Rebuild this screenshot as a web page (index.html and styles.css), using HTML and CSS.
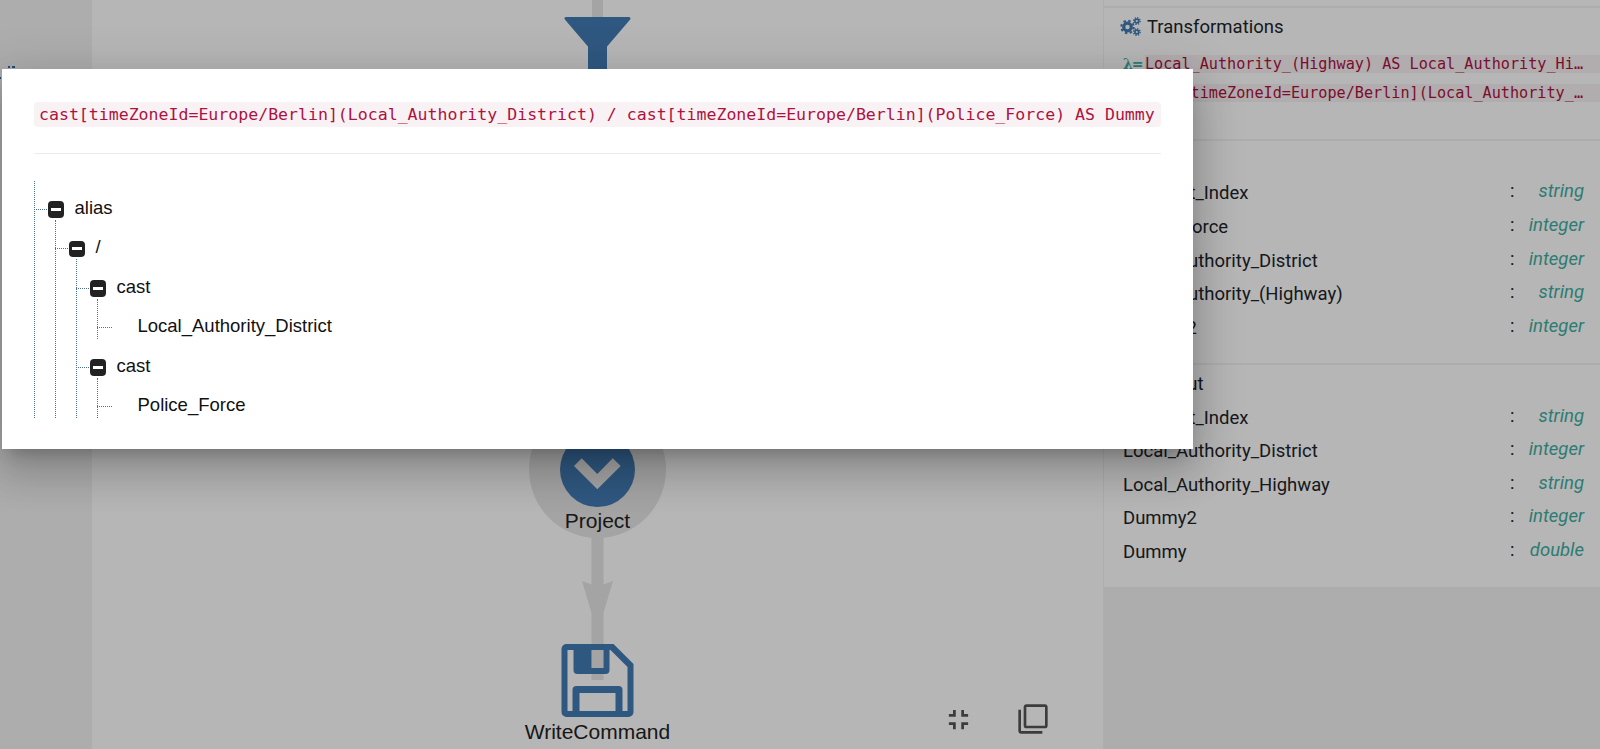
FILE: index.html
```html
<!DOCTYPE html>
<html lang="en">
<head>
<meta charset="utf-8">
<title>Plan</title>
<link rel="stylesheet" href="styles.css">
</head>
<body>
<div class="app">
  <aside class="gutter">
    <svg class="gutter-icon" width="20" height="30" viewBox="0 0 20 30"><path class="gutter-mark" d="M8 1h2M12 1h3M0 11v2"/></svg>
  </aside>
  <main class="canvas">
    <svg class="diagram" width="1011" height="749" viewBox="92 0 1011 749">
      <rect class="edge" x="592" y="0" width="11" height="20"/>
      <rect class="edge" x="591.5" y="530" width="12" height="150"/>
      <path class="edge" d="M582 581L591.5 584.5H603.500L613 581L597.500 633z"/>
      <path class="node" d="M566 18.500H629L605.500 46V100H589.500V46z"/>
      <circle class="halo" cx="597.500" cy="469.500" r="68.500"/>
      <circle class="node-plain" cx="597.500" cy="469.500" r="37.500"/>
      <path class="halo" d="M574 466L581.700 458.300L597.300 474L612.700 458.300L620.700 466L597.300 489.300z"/>
      <g transform="translate(561.500 644)">
        <path class="node-plain" fill-rule="evenodd" d="M5 0H52L72 20V68a5 5 0 0 1-5 5H5a5 5 0 0 1-5-5V5a5 5 0 0 1 5-5zM6 6V67H11V46a4 4 0 0 1 4-4H57a4 4 0 0 1 4 4V67H66V23L49 6H48V26a4 4 0 0 1-4 4H16a4 4 0 0 1-4-4V6zM18 49V67H54V49zM30 6V24H42V6z"/>
      </g>
    </svg>
    <div class="label label-project">Project</div>
    <div class="label label-write">WriteCommand</div>
    <div class="tools">
      <svg class="tool-exit" width="33" height="33" viewBox="0 0 24 24"><path d="M5 16h3v3h2v-5H5v2zm3-8H5v2h5V5H8v3zm6 11h2v-3h3v-2h-5v5zm2-11V5h-2v5h5V8h-3z"/></svg>
      <svg class="tool-copy" width="32" height="32" viewBox="0 0 24 24"><path d="M3 5H1v16c0 1.100.9 2 2 2h16v-2H3V5zm18-4H7c-1.100 0-2 .9-2 2v14c0 1.100.9 2 2 2h14c1.100 0 2-.9 2-2V3c0-1.100-.9-2-2-2zm0 16H7V3h14v14z"/></svg>
    </div>
  </main>
  <aside class="side">
    <div class="panel-stub"></div>
    <section class="panel panel-transform">
      <h2 class="panel-title">
        <svg class="gears" width="21" height="19" viewBox="0 0 21 19">
          <circle class="gear-body" cx="7.500" cy="10" r="3.800"/>
          <circle class="gear-teeth" cx="7.500" cy="10" r="6.200"/>
          <circle class="gear-body-s" cx="16.800" cy="4" r="1.900"/>
          <circle class="gear-teeth-s" cx="16.800" cy="4" r="3.300"/>
          <circle class="gear-body-s" cx="16.800" cy="15" r="1.900"/>
          <circle class="gear-teeth-s" cx="16.800" cy="15" r="3.300"/>
        </svg>
        Transformations
      </h2>
      <div class="expr"><span class="lambda">λ=</span><code class="expr-code">Local_Authority_(Highway) AS Local_Authority_Highway</code></div>
      <div class="expr"><span class="lambda">λ=</span><code class="expr-code">cast[timeZoneId=Europe/Berlin](Local_Authority_District) / cast[timeZoneId=Europe/Berlin](Police_Force) AS Dummy</code></div>
    </section>
    <section class="panel">
      <h2 class="panel-title panel-title-row">Input</h2>
      <div class="field"><span>Accident_Index</span><span class="colon">:</span><em class="type">string</em></div>
      <div class="field"><span>Police_Force</span><span class="colon">:</span><em class="type">integer</em></div>
      <div class="field"><span>Local_Authority_District</span><span class="colon">:</span><em class="type">integer</em></div>
      <div class="field"><span>Local_Authority_(Highway)</span><span class="colon">:</span><em class="type">string</em></div>
      <div class="field"><span>Dummy2</span><span class="colon">:</span><em class="type">integer</em></div>
    </section>
    <section class="panel">
      <h2 class="panel-title panel-title-row">Output</h2>
      <div class="field"><span>Accident_Index</span><span class="colon">:</span><em class="type">string</em></div>
      <div class="field"><span>Local_Authority_District</span><span class="colon">:</span><em class="type">integer</em></div>
      <div class="field"><span>Local_Authority_Highway</span><span class="colon">:</span><em class="type">string</em></div>
      <div class="field"><span>Dummy2</span><span class="colon">:</span><em class="type">integer</em></div>
      <div class="field"><span>Dummy</span><span class="colon">:</span><em class="type">double</em></div>
    </section>
  </aside>
  <div class="scrim"></div>
  <div class="modal">
    <code class="modal-code">cast[timeZoneId=Europe/Berlin](Local_Authority_District) / cast[timeZoneId=Europe/Berlin](Police_Force) AS Dummy</code>
    <hr class="modal-rule">
    <ul class="tree tree-root">
      <li>
        <div class="tree-row"><span class="toggle"></span><span>alias</span></div>
        <ul class="tree">
          <li>
            <div class="tree-row"><span class="toggle"></span><span>/</span></div>
            <ul class="tree">
              <li>
                <div class="tree-row"><span class="toggle"></span><span>cast</span></div>
                <ul class="tree">
                  <li><div class="tree-row"><span class="toggle toggle-none"></span><span>Local_Authority_District</span></div></li>
                </ul>
              </li>
              <li>
                <div class="tree-row"><span class="toggle"></span><span>cast</span></div>
                <ul class="tree">
                  <li><div class="tree-row"><span class="toggle toggle-none"></span><span>Police_Force</span></div></li>
                </ul>
              </li>
            </ul>
          </li>
        </ul>
      </li>
    </ul>
  </div>
</div>
</body>
</html>
```
FILE: styles.css
```css
* { box-sizing: border-box; }
html, body { margin: 0; height: 100%; }
body { font-family: "Liberation Sans", Arial, sans-serif; color: #212529; overflow: hidden; }

.app { position: relative; display: flex; height: 749px; overflow: hidden; background: #f3f3f3; }

.gutter { width: 92px; flex: none; padding-top: 66px; }
.gutter-icon { display: block; }
.gutter-mark { fill: none; stroke: #2f6fa8; stroke-width: 2; }

.canvas { position: relative; width: 1011px; flex: none; background: #fff; }
.diagram { position: absolute; left: 0; top: 0; display: block; }
.edge { fill: #e6e6e6; }
.node { fill: #427cb4; stroke: #427cb4; stroke-width: 3; stroke-linejoin: round; }
.node-plain { fill: #427cb4; }
.halo { fill: #e6e6e6; }
.label { position: absolute; width: 240px; text-align: center; font-size: 21px; line-height: 24px; left: 385.500px; color: #222; }
.label-project { top: 509px; }
.label-write { top: 720px; }
.tools { position: absolute; right: 54px; bottom: 13px; display: flex; align-items: center; gap: 42px; }
.tools svg { display: block; fill: #555; }
.tools .tool-exit { margin-top: 2px; }

.side { width: 497px; flex: none; font-family: Roboto, sans-serif; font-size: 18.500px; display: flex; flex-direction: column; gap: 2px; }
.panel-stub { height: 6px; margin-left: 1px; background: #fff; }
.panel { background: #fff; padding: 2.600px 16px 18px 19px; margin-left: 1px; }
.panel-transform { height: 130.500px; padding-right: 0; padding-top: 6.500px; }
.panel-title { margin: 0; font-weight: 400; font-size: 18.500px; line-height: 24px; display: flex; align-items: center; gap: 6px; color: #212529; }
.panel-title-row { height: 33.600px; padding-left: 25px; }
.gears { flex: none; margin-left: -3px; }
.gear-body { fill: none; stroke: #427cb4; stroke-width: 3.200; }
.gear-teeth { fill: none; stroke: #427cb4; stroke-width: 2; stroke-dasharray: 2.400 2.470; }
.gear-body-s { fill: none; stroke: #427cb4; stroke-width: 1.700; }
.gear-teeth-s { fill: none; stroke: #427cb4; stroke-width: 1.400; stroke-dasharray: 1.300 1.290; }

.expr { display: flex; align-items: center; height: 18px; margin-top: 11px; }
.panel-title + .expr { margin-top: 16px; }
.lambda { flex: none; width: 22px; font-family: "DejaVu Serif", serif; font-size: 14px; font-weight: 700; color: #3fae9f; line-height: 18px; letter-spacing: -1px; }
.expr-code, .modal-code { font-family: "DejaVu Sans Mono", "Liberation Mono", monospace; color: #ad1240; background: #f9f2f4; white-space: nowrap; }
.expr-code { flex: 1; min-width: 0; overflow: hidden; text-overflow: ellipsis; font-size: 15.170px; line-height: 18px; padding-right: 15px; }

.field { display: grid; grid-template-columns: 1fr 8px 66px; align-items: center; height: 33.600px; line-height: 24px; }
.colon { margin-bottom: 4px; }
.type { margin-bottom: 4px; text-align: right; color: #3fae9f; font-style: italic; }

.scrim { position: absolute; inset: 0; background: rgba(0, 0, 0, .288); }

.modal { position: absolute; left: 2px; top: 69px; width: 1191px; height: 380px; background: #fff; padding: 32.500px 32px 0; box-shadow: 0 11px 15px -7px rgba(0, 0, 0, .2), 0 24px 38px 3px rgba(0, 0, 0, .14), 0 9px 46px 8px rgba(0, 0, 0, .12); }
.modal-code { display: block; font-size: 16.560px; line-height: 25px; padding: 0 5px; border-radius: 4px; }
.modal-rule { margin: 26px 0 0; height: 1px; border: 0; background: #ececec; }

.tree { position: relative; list-style: none; margin: -9.500px 0 0 6.500px; padding: 9.500px 0 0 14.500px; font-size: 18.500px; color: #111; }
.tree::before { content: ""; position: absolute; left: 0; top: 0; bottom: 8.500px; border-left: 1px dotted #4a7396; }
.tree-root { margin: 27px 0 0; padding-top: 9px; }
.tree-row { position: relative; display: flex; align-items: center; gap: 10.500px; height: 39.500px; line-height: 24px; }
.tree-row::before { content: ""; position: absolute; left: -14.500px; width: 14.500px; top: 19px; border-top: 1px dotted #4a7396; }
.tree-row span:last-child { position: relative; top: -1.500px; }
.toggle { position: relative; flex: none; width: 16px; height: 16.500px; margin-left: -0.500px; border-radius: 4px; background: #222; }
.toggle::after { content: ""; position: absolute; left: 3px; right: 3px; top: 6.500px; height: 3px; background: #fff; }
.toggle-none { background: none; }
.toggle-none::after { display: none; }
```
